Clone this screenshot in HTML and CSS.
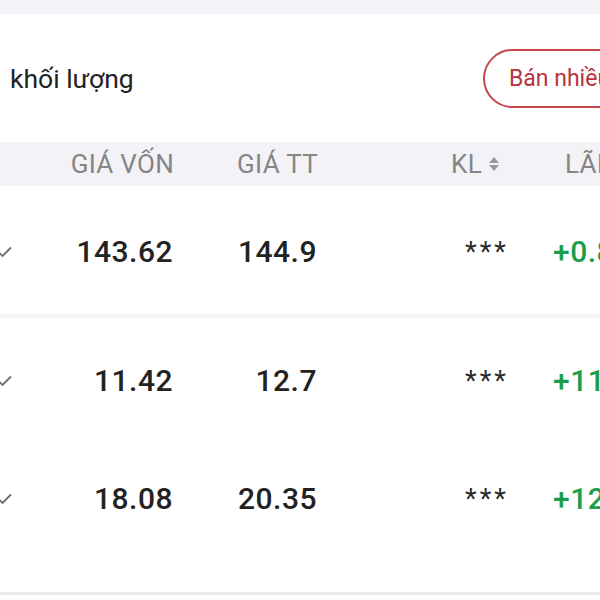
FILE: index.html
```html
<!DOCTYPE html>
<html lang="vi">
  <head>
    <meta charset="UTF-8" />
    <meta name="viewport" content="width=device-width, initial-scale=1.0" />
    <title>Danh mục</title>
    <link rel="stylesheet" href="styles.css">
  </head>
  <body>
    <div class="topbar"></div>

    <div class="toolbar">
      <span class="title">khối lượng</span>
      <button class="sell_button">Bán nhiều mã</button>
    </div>

    <div class="thead">
      <span></span>
      <span class="num">GIÁ VỐN</span>
      <span class="num">GIÁ TT</span>
      <span class="num kl">KL
        <svg class="sort" width="12" height="16" viewBox="0 0 12 16">
          <path d="M6 1 L11 7 H1 Z" fill="#9a9a9a" />
          <path d="M6 15 L11 9 H1 Z" fill="#9a9a9a" />
        </svg>
      </span>
      <span class="profit_head">LÃI/LỖ</span>
    </div>

    <div class="row first">
      <span class="check"><svg width="14" height="14" viewBox="0 0 14 14"><path d="M1 7.5 L4.5 11 L13 2.5" fill="none" stroke="#6f6f6f" stroke-width="1.9" /></svg></span>
      <span class="num">143.62</span>
      <span class="num">144.9</span>
      <span class="num stars">***</span>
      <span class="profit">+0.89%</span>
    </div>

    <div class="row second">
      <span class="check"><svg width="14" height="14" viewBox="0 0 14 14"><path d="M1 7.5 L4.5 11 L13 2.5" fill="none" stroke="#6f6f6f" stroke-width="1.9" /></svg></span>
      <span class="num">11.42</span>
      <span class="num">12.7</span>
      <span class="num stars">***</span>
      <span class="profit">+11.21%</span>
    </div>

    <div class="row last">
      <span class="check"><svg width="14" height="14" viewBox="0 0 14 14"><path d="M1 7.5 L4.5 11 L13 2.5" fill="none" stroke="#6f6f6f" stroke-width="1.9" /></svg></span>
      <span class="num">18.08</span>
      <span class="num">20.35</span>
      <span class="num stars">***</span>
      <span class="profit">+12.56%</span>
    </div>
  </body>
</html>
```

FILE: styles.css
```css
body {
  margin: 0;
  padding: 0;
  width: 600px;
  overflow: hidden;
  background-color: #ffffff;
  font-family: Roboto, "Liberation Sans", sans-serif;
  color: #222222;
}
.topbar {
  height: 14px;
  background-color: #f3f3f8;
}
.toolbar {
  height: 128px;
  display: grid;
  grid-template-columns: 483px max-content;
  align-items: center;
  white-space: nowrap;
}
.title {
  padding-left: 10px;
  font-size: 26.5px;
  color: #222222;
}
.sell_button {
  height: 59px;
  padding: 0 24px;
  border: 2px solid #c4464e;
  border-radius: 30px;
  background: #ffffff;
  color: #b8333d;
  font-family: Roboto, "Liberation Sans", sans-serif;
  font-size: 23px;
  white-space: nowrap;
}
.thead,
.row {
  display: grid;
  grid-template-columns: 40px 134px 144px 188px 1fr;
  white-space: nowrap;
}
.thead {
  height: 44px;
  align-items: center;
  background-color: #f3f3f7;
  color: #858585;
  font-size: 26px;
  letter-spacing: 0.3px;
}
.num {
  text-align: right;
}
.kl {
  display: flex;
  align-items: center;
  justify-content: flex-end;
  gap: 6px;
  padding-right: 6px;
}
.profit_head {
  padding-left: 59px;
}
.row {
  height: 30px;
  line-height: 30px;
  align-items: center;
  font-size: 30px;
  font-weight: 500;
  letter-spacing: 0.5px;
}
.row .num {
  margin-right: 1px;
}
.row.first {
  padding: 51px 0 47px;
  border-bottom: 4px solid #f4f4f4;
}
.row.second {
  padding: 48px 0 40px;
}
.row.last {
  padding: 48px 0 78px;
  border-bottom: 3px solid #ebebeb;
}
.check {
  display: flex;
  align-items: center;
  margin-left: -2px;
}
.row .stars {
  font-size: 27px;
  font-weight: 400;
  color: #2a2a2a;
  letter-spacing: 3px;
  margin-right: -3px;
}
.profit {
  padding-left: 47px;
  color: #1a9e4a;
}
```
